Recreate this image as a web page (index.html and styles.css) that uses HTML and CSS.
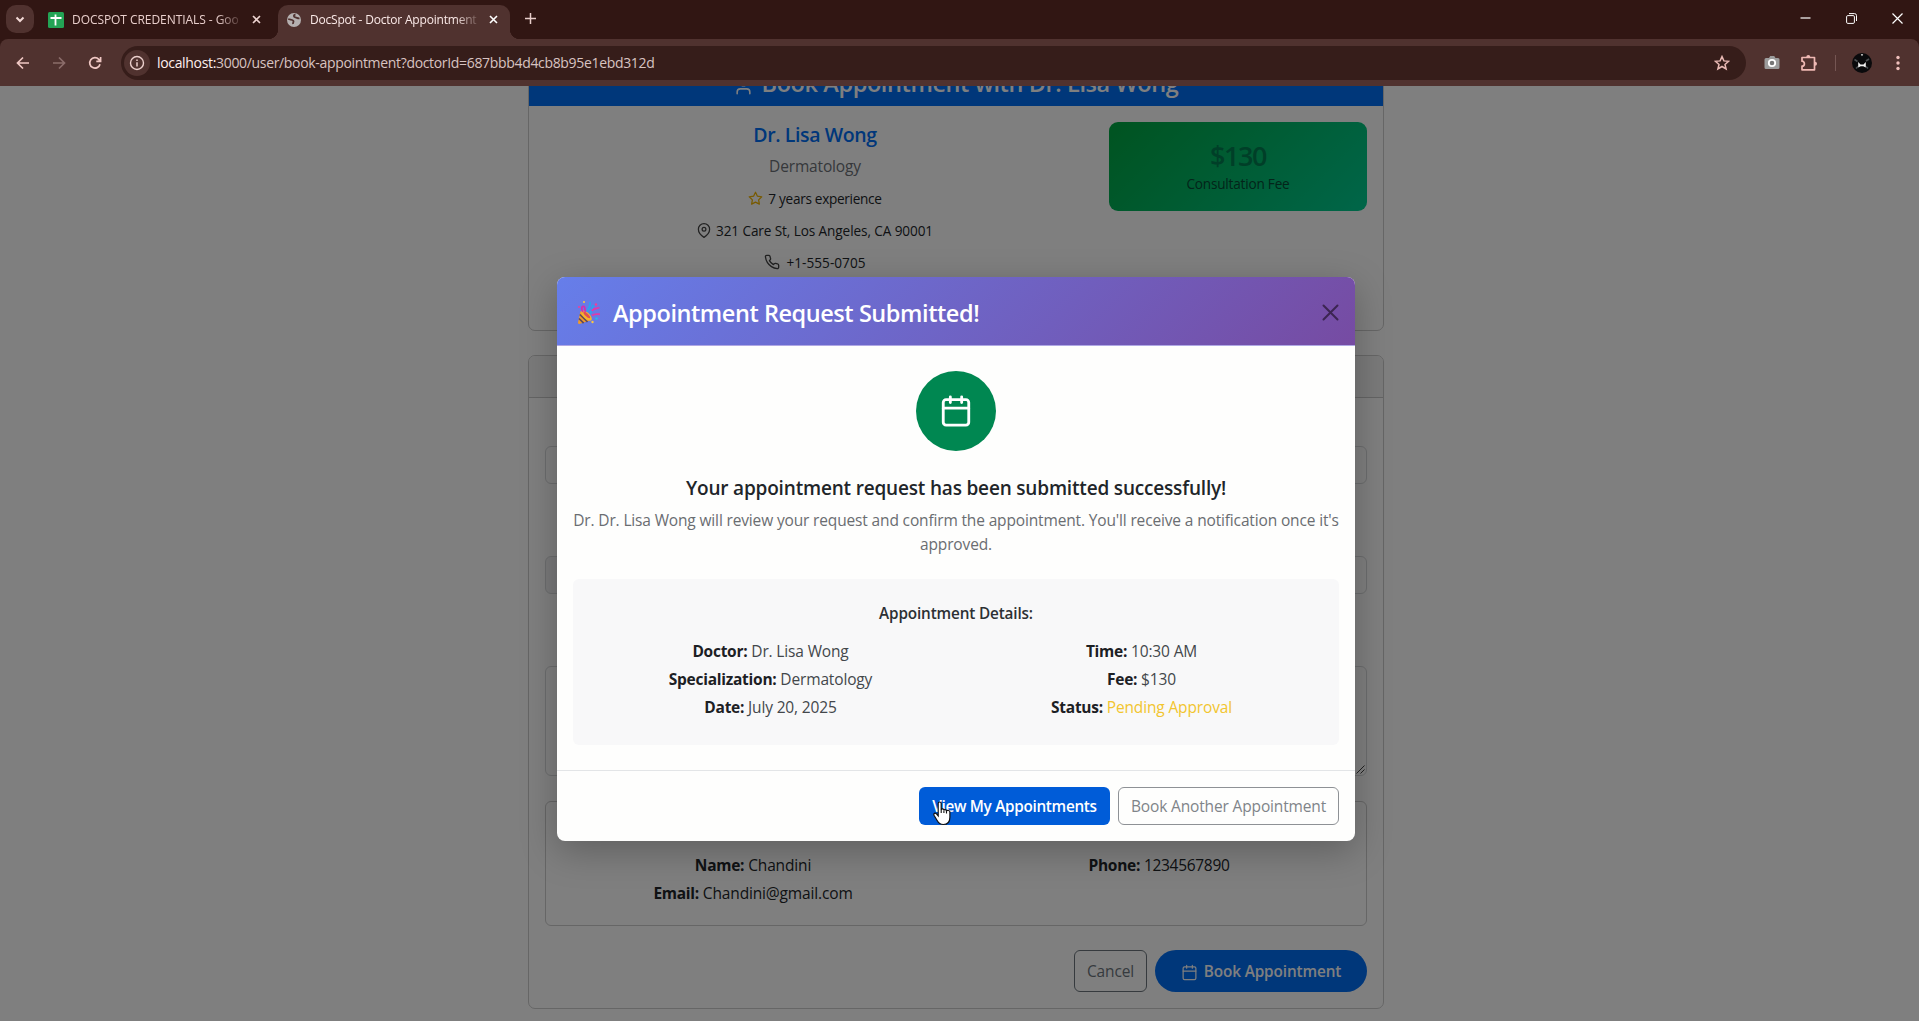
FILE: index.html
```html
<!DOCTYPE html>
<html lang="en">
<head>
<meta charset="utf-8">
<title>DocSpot - Doctor Appointment</title>
<link rel="stylesheet" href="styles.css">
</head>
<body>
<div class="browser">
  <header class="tabstrip">
    <div class="tab-search"><svg width="10" height="7" viewBox="0 0 10 7"><path d="M1.5 1.5 5 5l3.500-3.500" fill="none" stroke="#f3d9d6" stroke-width="2"/></svg></div>
    <div class="tab">
      <svg class="favicon" width="16" height="16" viewBox="0 0 16 16"><rect width="16" height="16" rx="1.500" fill="#23a455"/><path d="M7.500 2.500v11M2.500 6h11" stroke="#fff" stroke-width="1.800" fill="none"/></svg>
      <span class="tab-title">DOCSPOT CREDENTIALS - Goo</span>
      <svg class="tab-close" width="9" height="9" viewBox="0 0 9 9"><path d="M1 1l7 7M8 1 1 8" stroke="#ecd3d0" stroke-width="1.600"/></svg>
    </div>
    <div class="tab tab-active">
      <svg class="favicon" width="14" height="14" viewBox="0 0 14 14"><circle cx="7" cy="7" r="7" fill="#b5b0b0"/><path d="M8.500 1.500C6 2 6.500 4 8.500 4.400c1.500.3 2 1.200 4 1M1.200 6c2.300.8 4.500.4 5.200 1.800.6 1.200-.8 1.800-.3 3.200" fill="none" stroke="#50322f" stroke-width="1.800"/></svg>
      <span class="tab-title">DocSpot - Doctor Appointment</span>
      <svg class="tab-close" width="9" height="9" viewBox="0 0 9 9"><path d="M1 1l7 7M8 1 1 8" stroke="#fff" stroke-width="1.600"/></svg>
    </div>
    <svg class="new-tab" width="11" height="11" viewBox="0 0 11 11"><path d="M5.500 0v11M0 5.500h11" stroke="#e8cdca" stroke-width="1.500"/></svg>
    <div class="window-controls">
      <svg width="11" height="11" viewBox="0 0 11 11"><path d="M.5 5h10" stroke="#fff" stroke-width="1.200"/></svg>
      <svg width="11" height="11" viewBox="0 0 11 11"><g fill="none" stroke="#fff"><rect x=".6" y="2.600" width="7.800" height="7.800" rx="1.200"/><path d="M3 .6h5.500a2 2 0 0 1 2 2V8"/></g></svg>
      <svg width="11" height="11" viewBox="0 0 11 11"><path d="M.5.5l10 10M10.500.5l-10 10" stroke="#fff" stroke-width="1.200"/></svg>
    </div>
  </header>
  <nav class="toolbar">
    <svg class="nav-icon" width="14" height="14" viewBox="0 0 14 14"><path d="M13 7H2M7 1.500 1.500 7 7 12.500" fill="none" stroke="#f0c8c4" stroke-width="1.700"/></svg>
    <svg class="nav-icon" width="14" height="14" viewBox="0 0 14 14"><path d="M1 7h11M7 1.500 12.500 7 7 12.500" fill="none" stroke="#8b6d6a" stroke-width="1.700"/></svg>
    <svg class="nav-icon" width="14" height="14" viewBox="0 0 14 14"><path d="M12 8.200A5.200 5.200 0 1 1 10.800 3.400L12.300 5M12.600 1v4.300H8.300" fill="none" stroke="#f0c8c4" stroke-width="1.700"/></svg>
    <div class="address-bar">
      <div class="site-info"><svg width="16" height="16" viewBox="0 0 16 16"><circle cx="8" cy="8" r="6.500" fill="none" stroke="#ecd0cd" stroke-width="1.400"/><path d="M8 7.200V11.500M8 4.500V6" stroke="#ecd0cd" stroke-width="1.500"/></svg></div>
      <span class="url"><span class="url-host">localhost:</span>3000/user/book-appointment?doctorId=687bbb4d4cb8b95e1ebd312d</span>
      <svg class="bookmark" width="16" height="16" viewBox="0 0 16 16"><path d="M8 1.600l1.900 4.300 4.700.4-3.600 3.100 1.100 4.600L8 11.500 3.900 14 5 9.400 1.400 6.300l4.700-.4z" fill="none" stroke="#e9b9b4" stroke-width="1.500"/></svg>
    </div>
    <svg class="ext-camera" width="16" height="15" viewBox="0 0 16 15"><path d="M2 3h3l1.200-2h4L11.500 3H14a1.500 1.500 0 0 1 1.500 1.500v8A1.500 1.500 0 0 1 14 14H2a1.500 1.500 0 0 1-1.500-1.500v-8A1.500 1.500 0 0 1 2 3z" fill="#9c9c9c"/><circle cx="8" cy="8" r="3.200" fill="#777" stroke="#fff" stroke-width="1.800"/></svg>
    <svg class="ext-puzzle" width="18" height="18" viewBox="0 0 18 18"><path d="M2 3.500h12.500v12.300H2v-3.600c3.200 0 3.200-5 0-5z" fill="none" stroke="#efb9b4" stroke-width="1.700" stroke-linejoin="round"/><path d="M6.300 3a2 2 0 0 1 4 0zM15 7.700a2 2 0 0 1 0 4z" fill="#efb9b4"/></svg>
    <span class="toolbar-divider"></span>
    <svg class="avatar" width="20" height="20" viewBox="0 0 20 20"><circle cx="10" cy="10" r="10" fill="#0a0a0c"/><path d="M2.500 6.500l3 2M17 6l-3 2M4 15.500l2-2M16 15.500l-2-2" stroke="#4c5052" stroke-width="1.600"/><path d="M8.800 1.200h2.400L10 3.200zM6.200 9l2.300 2.500h3L13.800 9v5.500l-2.500-1.300H8.700l-2.500 1.300z" fill="#f1f1f1"/></svg>
    <svg class="kebab" width="4" height="16" viewBox="0 0 4 16"><g fill="#f0c0bc"><circle cx="2" cy="2.500" r="1.700"/><circle cx="2" cy="8" r="1.700"/><circle cx="2" cy="13.500" r="1.700"/></g></svg>
  </nav>
</div>

<main class="viewport">
  <section class="card doctor-card">
    <div class="doctor-header">
      <svg width="19" height="19" viewBox="0 0 24 24" class="line-icon"><path d="M20 21v-2a4 4 0 0 0-4-4H8a4 4 0 0 0-4 4v2"/><circle cx="12" cy="7" r="4"/></svg>
      <h4>Book Appointment with Dr. Lisa Wong</h4>
    </div>
    <div class="doctor-body">
      <div class="doctor-info">
        <h5>Dr. Lisa Wong</h5>
        <p class="specialty">Dermatology</p>
        <div class="info-row"><svg class="line-icon star" width="15" height="15" viewBox="0 0 24 24"><path d="M12 2l3.090 6.260L22 9.270l-5 4.870 1.180 6.880L12 17.770l-6.180 3.250L7 14.140 2 9.270l6.910-1.010z"/></svg><span class="experience">7 years experience</span></div>
        <div class="info-row"><svg class="line-icon" width="14" height="15" viewBox="1 0 22 24"><path d="M21 10c0 7-9 13-9 13s-9-6-9-13a9 9 0 0 1 18 0z"/><circle cx="12" cy="10" r="3"/></svg><span class="address">321 Care St, Los Angeles, CA 90001</span></div>
        <div class="info-row phone-row"><svg class="line-icon" width="16" height="16" viewBox="0 0 24 24"><path d="M22 16.920v3a2 2 0 0 1-2.180 2 19.790 19.790 0 0 1-8.630-3.070 19.500 19.500 0 0 1-6-6 19.790 19.790 0 0 1-3.070-8.670A2 2 0 0 1 4.110 2h3a2 2 0 0 1 2 1.720c.127.960.361 1.903.7 2.810a2 2 0 0 1-.45 2.110L8.090 9.910a16 16 0 0 0 6 6l1.270-1.270a2 2 0 0 1 2.110-.45c.907.339 1.850.573 2.810.7A2 2 0 0 1 22 16.920z"/></svg><span class="phone">+1-555-0705</span></div>
      </div>
      <div class="fee-box"><h3>$130</h3><small>Consultation Fee</small></div>
    </div>
  </section>

  <section class="card form-card">
    <div class="form-header"></div>
    <div class="form-body">
      <div class="control date-control"></div>
      <div class="control select-control"></div>
      <div class="control textarea-control"><svg width="9" height="9" viewBox="0 0 9 9"><path d="M.5 8.500l8-8M4.500 8.500l4-4" stroke="#444" stroke-width="1"/></svg></div>
      <div class="patient">
        <div class="col"><p class="line"><strong>Name:</strong> Chandini</p><p class="line"><strong>Email:</strong> Chandini@gmail.com</p></div>
        <div class="col"><p class="line number-line"><strong>Phone:</strong> 1234567890</p></div>
      </div>
      <div class="form-actions">
        <div class="btn btn-cancel">Cancel</div>
        <div class="btn btn-book"><svg class="line-icon" width="17" height="17" viewBox="0 0 24 24"><rect x="3" y="4" width="18" height="18" rx="2"/><path d="M16 2v4M8 2v4M3 10h18"/></svg>Book Appointment</div>
      </div>
    </div>
  </section>

  <div class="backdrop">
    <section class="modal">
      <div class="modal-header">
        <svg class="party" width="24" height="25" viewBox="0 0 24 25"><path d="M3.500 11 1 22.500q-.2 1.600 1.400 1.400L14 20z" fill="#f09a2c"/><path d="M2.800 14.500 10.500 22M2 18.500l4.600 4.600" stroke="#5f4a5c" stroke-width="1.700"/><ellipse cx="9.500" cy="15.500" rx="3" ry="6.800" transform="rotate(-46 9.500 15.500)" fill="#f4b52c"/><ellipse cx="9.800" cy="15" rx="1.500" ry="4.400" transform="rotate(-46 9.800 15)" fill="#e04d55"/><path d="M6 12C4 8.500 4.500 5.500 7 6.500c1.500 1 .5 3.500 1.500 5.500" fill="none" stroke="#d62cae" stroke-width="1.700"/><path d="M10.500 12c0-4 3.500-4 2.500-10M13 13.500c2.500-2 1-5 3.500-8.500" fill="none" stroke="#2ba3f0" stroke-width="1.900"/><path d="M15 11c1-3 4-2 7.500-3.500M15 15.500c2.500-2 4-1.500 8-1.200" fill="none" stroke="#e03aa8" stroke-width="1.900"/><g fill="#f33d96"><circle cx="2" cy="7" r="1"/><circle cx="19" cy="4.500" r="1.200"/></g><g fill="#ffc83d"><circle cx="7" cy="2" r="1"/><circle cx="15.500" cy="22" r="1.200"/></g><circle cx="19.500" cy="18.500" r="1.300" fill="#25b4f0"/></svg>
        <h4>Appointment Request Submitted!</h4>
        <svg class="close" width="17" height="17" viewBox="0 0 17 17"><path d="M1.500 1.500l14 14M15.500 1.500l-14 14" stroke="#3c2552" stroke-width="2" stroke-linecap="round"/></svg>
      </div>
      <div class="modal-body">
        <div class="success-icon"><svg width="34" height="34" viewBox="0 0 24 24" class="line-icon"><rect x="3" y="4" width="18" height="18" rx="2"/><path d="M16 2v4M8 2v4M3 10h18"/></svg></div>
        <h5>Your appointment request has been submitted successfully!</h5>
        <p class="message">Dr. Dr. Lisa Wong will review your request and confirm the appointment. You'll receive a notification once it's<br>approved.</p>
        <div class="details">
          <h6>Appointment Details:</h6>
          <div class="details-row">
            <div class="col"><p class="line"><strong>Doctor:</strong> Dr. Lisa Wong</p><p class="line"><strong>Specialization:</strong> Dermatology</p><p class="line"><strong>Date:</strong> July 20, 2025</p></div>
            <div class="col"><p class="line"><strong>Time:</strong> 10:30 AM</p><p class="line"><strong>Fee:</strong> $130</p><p class="line"><strong>Status:</strong> <span class="pending">Pending Approval</span></p></div>
          </div>
        </div>
      </div>
      <div class="modal-footer">
        <div class="btn btn-view">View My Appointments</div>
        <div class="btn btn-another">Book Another Appointment</div>
      </div>
    </section>
  </div>
</main>

<svg class="cursor" width="20" height="25" viewBox="0 0 20 25"><path d="M6.200 2.500c0-2 3-2 3 0v6.300c.3-1.300 2.600-1.100 2.700.4.500-1.100 2.500-.8 2.600.7.600-.9 3.300-.6 3.400 1v5.300c0 4.500-2.600 7.300-6.700 7.300-3.300 0-4.800-1.700-6.200-4.300L2 14.300c-.9-1.700 1.100-3 2.500-1.400l1.700 2z" fill="#fff" stroke="#111" stroke-width="1.200"/><path d="M9.200 8.500V12M11.900 9.500V12M14.500 10.300V12.500" stroke="#111" stroke-width="1.100"/></svg>
</body>
</html>
```
FILE: styles.css
```css
* { box-sizing: border-box; }
html, body { margin: 0; height: 100%; overflow: hidden; }
body {
  display: flex; flex-direction: column; position: relative;
  font-family: "Open Sans", "Noto Sans", sans-serif;
  font-size: 15.5px; line-height: 24px; letter-spacing: -0.15px; color: #212529;
  background: #311613;
}
h3, h4, h5, h6, p { margin: 0; font-weight: 600; }
p { font-weight: 400; }
svg { display: block; flex: none; }
.line-icon { fill: none; stroke: currentColor; stroke-width: 2; stroke-linecap: round; stroke-linejoin: round; }

/* browser frame */
.browser { flex: none; height: 86px; }
.tabstrip { display: flex; height: 39px; align-items: flex-start; padding: 5px 0 0 6px; }
.tab-search { display: flex; align-items: center; justify-content: center; width: 28px; height: 28px; border-radius: 10px; background: #50322f; }
.tab { display: flex; align-items: center; height: 29px; padding: 0 17px 0 14px; width: 244px; }
.tab-active { position: relative; width: 232px; height: 34px; padding: 0 12px 5px 9px; border-radius: 10px 10px 0 0; background: #50322f; }
.tab-active::before, .tab-active::after { content: ""; position: absolute; bottom: 0; width: 10px; height: 10px; }
.tab-active::before { left: -10px; background: radial-gradient(circle at 0 0, transparent 10px, #50322f 10.500px); }
.tab-active::after { right: -10px; background: radial-gradient(circle at 100% 0, transparent 10px, #50322f 10.500px); }
.tab-title {
  flex: none; width: 170px; margin-left: 8px; white-space: nowrap;
  font-size: 12px; letter-spacing: -0.06px; color: #e9cfcc;
  mask-image: linear-gradient(90deg, #000 145px, rgba(0, 0, 0, .15) 168px);
}
.tab-active .tab-title { letter-spacing: -0.2px; color: #fbeae8; margin-left: 9px; }
.tab-close { margin-left: auto; }
.new-tab { margin: 8px 0 0 15px; }
.window-controls { display: flex; gap: 35px; margin: 8px 16px 0 auto; }
.toolbar { display: flex; align-items: center; height: 47px; padding: 0 19px 0 16px; border-radius: 8px 8px 0 0; background: #50322f; }
.nav-icon { margin-right: 22px; }
.nav-icon:nth-child(3) { margin-right: 19px; }
.address-bar { display: flex; align-items: center; flex: none; width: 1625px; height: 34px; padding: 0 16px 0 4px; border-radius: 17px; background: #361d1a; }
.site-info { display: flex; align-items: center; justify-content: center; width: 26px; height: 26px; margin-left: -1px; border-radius: 13px; background: #50322f; }
.url { margin-left: 7px; font-size: 14px; letter-spacing: -0.33px; color: #d8c3c1; }
.url-host { color: #fff0ee; }
.bookmark { margin-left: auto; }
.ext-camera { margin-left: 18px; }
.ext-puzzle { margin-left: 20px; }
.toolbar-divider { width: 1px; height: 16px; margin: 0 16px 0 17px; background: #755653; }
.kebab { margin-left: auto; }

/* page */
.viewport { position: relative; flex: 1; min-height: 0; overflow: hidden; display: flex; flex-direction: column; align-items: center; padding-right: 7px; background: #fff; }
.card { flex: none; width: 856px; border: 1px solid #ccc; border-radius: 7px; }
.doctor-card { height: 285px; margin-top: -40px; }
.doctor-header { display: flex; justify-content: center; gap: 10px; height: 59px; padding-top: 16px; border-radius: 6px 6px 0 0; color: #fff; background: #006ef5; }
.doctor-header svg { margin: 14px -1px 0 0; }
h4 { font-size: 23.5px; line-height: 40px; letter-spacing: -0.4px; white-space: nowrap; }
.doctor-body { display: flex; gap: 24px; padding: 16px 16px 0; }
.doctor-info { width: 540px; padding-top: 1px; text-align: center; }
.doctor-info h5 { font-size: 19.5px; letter-spacing: -0.4px; color: #006ef5; margin-bottom: 7px; }
.specialty { color: #6c7177; margin-bottom: 4px; }
.info-row { display: flex; align-items: center; justify-content: center; gap: 5px; height: 32px; font-size: 13.6px; line-height: 21px; letter-spacing: -0.1px; }
.info-row svg { color: #444; }
.info-row .star { color: #f0b400; }
.experience { letter-spacing: -0.3px; }
.phone-row { gap: 6px; letter-spacing: 0.03px; }
.fee-box { width: 258px; height: 89px; padding-top: 18px; border-radius: 9px; text-align: center; background: linear-gradient(135deg, #00a741, #00cc92); }
.fee-box h3 { font-size: 27px; line-height: 32px; letter-spacing: -1.4px; color: #007f50; }
.fee-box small { display: block; margin-top: 1px; font-size: 13.6px; line-height: 21px; letter-spacing: -0.2px; color: #064a34; }
.form-card { height: 654px; margin-top: 24px; }
.form-header { height: 42px; border-bottom: 1px solid #c8c8c8; background: #f4f4f4; border-radius: 6px 6px 0 0; }
.form-body { padding: 0 16px; }
.control { border: 1px solid #d8dadc; border-radius: 6px; height: 38px; }
.date-control { margin-top: 48px; }
.select-control { margin-top: 72px; background: linear-gradient(90deg, #f2f3f5 20%, #fff 80%); }
.textarea-control { display: flex; align-items: flex-end; justify-content: flex-end; height: 110px; margin-top: 72px; padding: 1px; }
.patient { display: flex; height: 125px; margin-top: 25px; padding: 51px 4px 0; border: 1px solid #ccc; border-radius: 6px; }
.col { flex: 1; text-align: center; }
.line { line-height: 24px; margin-bottom: 4.200px; white-space: nowrap; }
.line strong { font-weight: 700; letter-spacing: -0.26px; }
.number-line { letter-spacing: -0.3px; }
.form-actions { display: flex; justify-content: flex-end; gap: 8px; margin-top: 24px; }
.btn { display: flex; align-items: center; justify-content: center; border-radius: 6px; white-space: nowrap; }
.btn-cancel { width: 73px; height: 42px; border: 1px solid #6c757d; color: #6c757d; }
.btn-book { gap: 6px; width: 212px; height: 42px; border-radius: 21px; font-size: 15.3px; font-weight: 600; letter-spacing: -0.1px; color: #fff; background: #006ef5; }
.btn-book svg { margin-top: 2px; stroke-width: 1.700; }

/* dialog */
.backdrop { position: absolute; inset: 0; display: flex; justify-content: center; align-items: flex-start; padding: 191px 7px 0 0; background: rgba(0, 0, 0, .5); }
.modal { width: 798px; height: 564px; overflow: hidden; border-radius: 8px; background: #fefefd; box-shadow: 0 10px 36px rgba(0, 0, 0, .25); }
.modal-header { display: flex; align-items: center; height: 69px; padding: 2px 16px 0 20px; border-bottom: 1px solid #b0a8e4; color: #fff; background: linear-gradient(135deg, #667eea, #764ba2); }
.modal-header h4 { margin: 1px 0 0 12px; letter-spacing: -0.44px; }
.close { margin-left: auto; }
.modal-body { padding: 25px 16px; text-align: center; }
.success-icon { display: flex; align-items: center; justify-content: center; width: 80px; height: 80px; margin: 0 auto 25px; border-radius: 50%; color: #fff; background: #008751; }
.modal-body h5 { font-size: 19px; line-height: 24px; letter-spacing: -0.18px; }
.message { margin-top: 8px; color: #6a6d71; white-space: nowrap; }
.details { height: 166px; margin-top: 23px; padding: 22px 12px 0; border-radius: 6px; color: #43474b; background: #f8f8f9; }
.details h6 { font-size: 15.3px; line-height: 24px; letter-spacing: -0.15px; color: #2c3034; margin-bottom: 14px; }
.details strong { color: #1c2024; }
.details-row { display: flex; }
.pending { color: #f2c52f; }
.modal-footer { display: flex; justify-content: flex-end; gap: 8px; padding: 16px; border-top: 1px solid #e3e5e7; }
.btn-view { width: 191px; height: 38px; font-size: 15.3px; font-weight: 600; letter-spacing: -0.3px; color: #fff; background: #005cd8; }
.btn-another { width: 221px; height: 38px; border: 1px solid #8e9195; color: #808489; }
.cursor { position: absolute; left: 932px; top: 801px; }
```
